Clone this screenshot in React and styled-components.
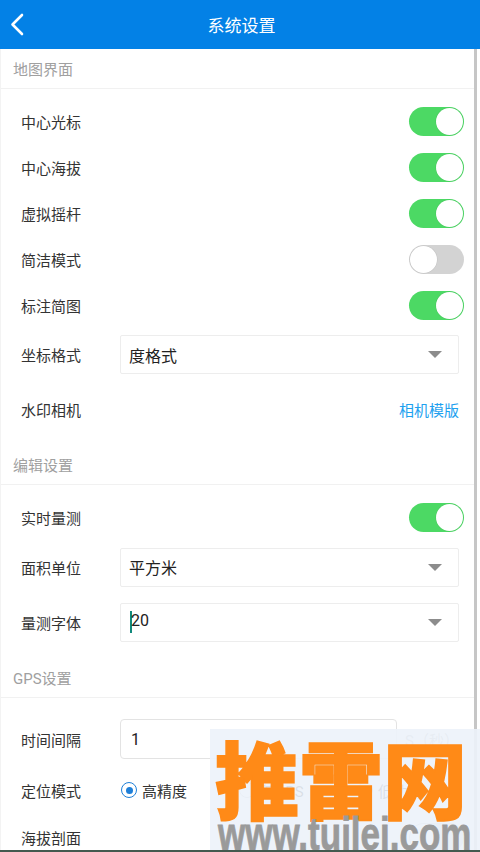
import React from "react";
import styled, { createGlobalStyle } from "styled-components";

const GlobalStyle = createGlobalStyle`
  html, body { margin: 0; padding: 0; background: #fff; }
  body { font-family: Roboto, "Noto Sans CJK SC", sans-serif; }
  * { box-sizing: border-box; }
`;

const Screen = styled.div`
  position: relative;
  width: 480px;
  height: 852px;
  display: flex;
  flex-direction: column;
  overflow: hidden;
  background: #fff;
  border-bottom: 2px solid #44594f;
`;

const Header = styled.header`
  flex: 0 0 49px;
  display: grid;
  grid-template-columns: 48px 1fr 48px;
  align-items: center;
  background: #0381e6;
  color: #fff;
`;

const BackButton = styled.button`
  border: 0;
  background: none;
  padding: 0;
  height: 49px;
  display: flex;
  align-items: center;
`;

const Title = styled.h1`
  margin: 0;
  text-align: center;
  font-size: 17px;
  font-weight: 400;
  padding-left: 3px;
`;

const Body = styled.div`
  flex: 1;
  display: flex;
  min-height: 0;
`;

const Content = styled.main`
  flex: 1;
  min-width: 0;
  border-left: 1px solid #f3f3f3;
`;

const ScrollThumb = styled.div`
  flex: 0 0 3px;
  margin-right: 3px;
  background: #c6c6c6;
`;

const SectionTitle = styled.div`
  height: 40px;
  display: flex;
  align-items: center;
  padding-left: 12px;
  font-size: 15px;
  color: #a0a0a0;
  border-bottom: 1px solid #f1f1f1;
`;

const Group = styled.section`
  padding: ${(p) => p.$top || 9}px 0 ${(p) => p.$bottom || 8}px;
`;

const Row = styled.div`
  height: ${(p) => p.$h}px;
  display: flex;
  align-items: center;
  padding: 0 15px 0 20px;
`;

const Label = styled.span`
  flex: 0 0 99px;
  font-size: 15px;
  color: #333;
`;

const Toggle = styled.span`
  margin-left: auto;
  margin-right: -5px;
  position: relative;
  width: 55px;
  height: 29px;
  border-radius: 15px;
  background: ${(p) => (p.$on ? "#4cd964" : "#d3d3d3")};
  &::after {
    content: "";
    position: absolute;
    top: 1px;
    left: ${(p) => (p.$on ? "27px" : "1px")};
    width: 27px;
    height: 27px;
    border-radius: 50%;
    background: #fff;
    box-shadow: 0 0 0 0.5px rgba(0, 0, 0, 0.08);
  }
`;

const Select = styled.div`
  flex: 1;
  height: 39px;
  display: flex;
  align-items: center;
  justify-content: space-between;
  padding: 0 16px 0 8px;
  border: 1px solid #ededed;
  border-radius: 2px;
  font-size: 16px;
  color: #222;
`;

const Arrow = styled.span`
  width: 0;
  height: 0;
  border-left: 7px solid transparent;
  border-right: 7px solid transparent;
  border-top: 7px solid #8c8c8c;
`;

const Cursor = styled.span`
  display: inline-block;
  width: 2px;
  height: 22px;
  background: #11897c;
  vertical-align: middle;
  margin: 0 -1px 0 1px;
`;

const LinkText = styled.a`
  margin-left: auto;
  font-size: 15px;
  color: #1ea1ef;
  text-decoration: none;
`;

const TextInput = styled.div`
  flex: 0 0 277px;
  height: 40px;
  display: flex;
  align-items: center;
  padding-left: 10px;
  border: 1px solid #e3e3e3;
  border-radius: 4px;
  font-size: 16px;
  color: #222;
`;

const Unit = styled.span`
  margin-left: 8px;
  font-size: 15px;
  color: #b4b4b4;
`;

const RadioGroup = styled.div`
  display: flex;
  margin-left: 1px;
`;

const RadioOption = styled.label`
  width: 118px;
  display: flex;
  align-items: center;
  gap: 5px;
  font-size: 15px;
  color: #333;
`;

const RadioDot = styled.span`
  width: 16px;
  height: 16px;
  border-radius: 50%;
  border: 1.5px solid ${(p) => (p.$checked ? "#1e7fd8" : "#c8c8c8")};
  display: flex;
  align-items: center;
  justify-content: center;
  &::after {
    content: "";
    width: 7px;
    height: 7px;
    border-radius: 50%;
    background: ${(p) => (p.$checked ? "#1e7fd8" : "transparent")};
  }
`;

const Watermark = styled.div`
  position: absolute;
  right: 0;
  bottom: 0;
  width: 270px;
  height: 121px;
  background: rgba(236, 242, 249, 0.9);
  display: flex;
  flex-direction: column;
  overflow: hidden;
`;

const WatermarkTitle = styled.div`
  margin: 6px 0 0 5px;
  font-family: "Noto Sans CJK SC", sans-serif;
  font-weight: 900;
  font-size: 84px;
  line-height: 84px;
  color: #ff8a17;
  white-space: nowrap;
  -webkit-text-stroke: 1.5px #ff8a17;
`;

const WatermarkUrl = styled.div`
  margin: -8px 0 0 8px;
  font-family: "Liberation Sans", Arial, sans-serif;
  font-weight: 700;
  font-size: 35px;
  line-height: 35px;
  color: #9a9a9a;
  white-space: nowrap;
  transform: scaleY(1.3);
  transform-origin: top left;
  -webkit-text-stroke: 0.6px #9a9a9a;
`;

const ToggleRow = ({ label, on, h = 46 }) => (
  <Row $h={h}>
    <Label>{label}</Label>
    <Toggle $on={on} />
  </Row>
);

const SelectRow = ({ label, value, cursor, h }) => (
  <Row $h={h}>
    <Label>{label}</Label>
    <Select>
      <span>
        {cursor && <Cursor />}
        {value}
      </span>
      <Arrow />
    </Select>
  </Row>
);

export default function App() {
  return (
    <>
      <GlobalStyle />
      <Screen>
        <Header>
          <BackButton aria-label="返回">
            <svg width="30" height="49" viewBox="0 0 30 49">
              <polyline
                points="22,15 12.5,24.5 22,34"
                fill="none"
                stroke="#fff"
                strokeWidth="2.6"
                strokeLinecap="round"
                strokeLinejoin="round"
              />
            </svg>
          </BackButton>
          <Title>系统设置</Title>
          <span />
        </Header>
        <Body>
          <Content>
            <SectionTitle>地图界面</SectionTitle>
            <Group>
              <ToggleRow label="中心光标" on />
              <ToggleRow label="中心海拔" on />
              <ToggleRow label="虚拟摇杆" on />
              <ToggleRow label="简洁模式" on={false} />
              <ToggleRow label="标注简图" on />
              <SelectRow label="坐标格式" value="度格式" h={53} />
              <Row $h={56}>
                <Label>水印相机</Label>
                <LinkText>相机模版</LinkText>
              </Row>
            </Group>

            <SectionTitle>编辑设置</SectionTitle>
            <Group>
              <ToggleRow label="实时量测" on />
              <SelectRow label="面积单位" value="平方米" h={54} />
              <SelectRow label="量测字体" value="20" cursor h={56} />
            </Group>

            <SectionTitle>GPS设置</SectionTitle>
            <Group $top={14}>
              <Row $h={54}>
                <Label>时间间隔</Label>
                <TextInput>1</TextInput>
                <Unit>S（秒）</Unit>
              </Row>
              <Row $h={48}>
                <Label>定位模式</Label>
                <RadioGroup>
                  <RadioOption>
                    <RadioDot $checked />
                    高精度
                  </RadioOption>
                  <RadioOption>
                    <RadioDot />
                    仅GPS
                  </RadioOption>
                  <RadioOption>
                    <RadioDot />
                    低功耗
                  </RadioOption>
                </RadioGroup>
              </Row>
              <ToggleRow label="海拔剖面" on={false} />
            </Group>
          </Content>
          <ScrollThumb />
        </Body>
        <Watermark>
          <WatermarkTitle>推雷网</WatermarkTitle>
          <WatermarkUrl>www.tuilei.com</WatermarkUrl>
        </Watermark>
      </Screen>
    </>
  );
}
